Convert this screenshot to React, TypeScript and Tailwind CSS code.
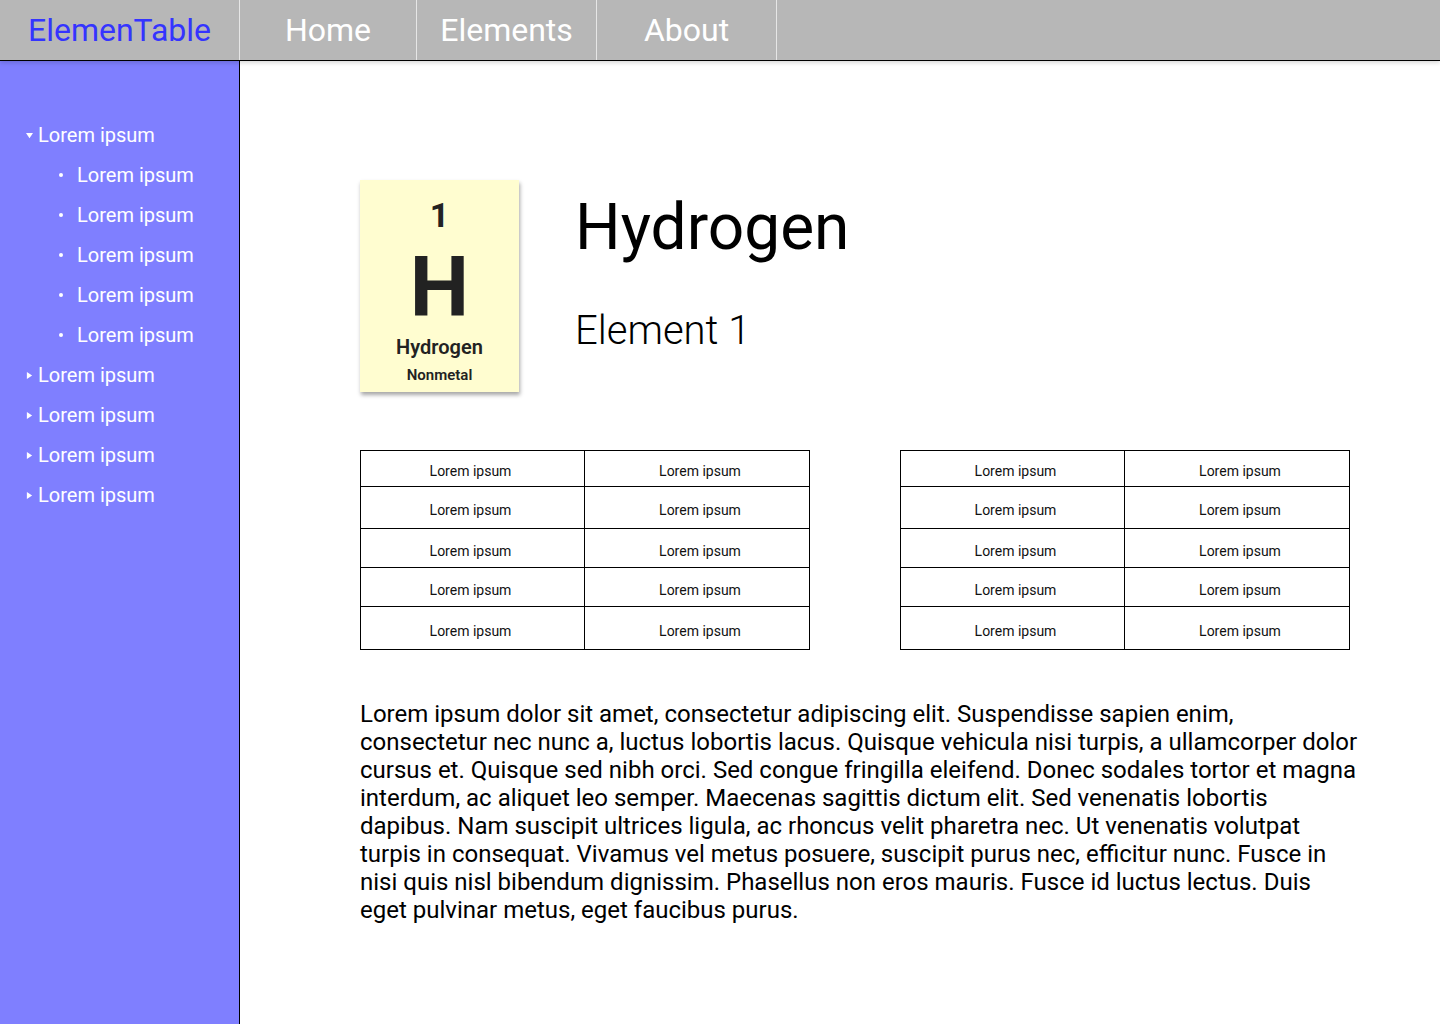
const font = { fontFamily: "Roboto, 'Liberation Sans', sans-serif" };

const navItems = [
  { label: "Home", w: "w-[177px]" },
  { label: "Elements", w: "w-[180px]" },
  { label: "About", w: "w-[180px]" },
];

const rowHeights = ["h-[36px]", "h-[42px]", "h-[39px]", "h-[39px]", "h-[43px]"];

function Triangle({ down }: { down?: boolean }) {
  return (
    <svg width="7" height="7" viewBox="0 0 8 8" className="mr-[5px] mt-[1px]">
      {down ? <path d="M0 1 L8 1 L4 7 Z" fill="white" /> : <path d="M1 0 L7 4 L1 8 Z" fill="white" />}
    </svg>
  );
}

function InfoTable({ firstPad }: { firstPad: string }) {
  return (
    <table className="w-[450px] border-collapse border border-black text-[14px] text-[#111]">
      <tbody>
        {rowHeights.map((h, i) => (
          <tr key={i} className={h}>
            <td className={`w-[224px] border border-black pt-[6px] text-center ${firstPad}`}>Lorem ipsum</td>
            <td className="border border-black pl-[6px] pt-[6px] text-center">Lorem ipsum</td>
          </tr>
        ))}
      </tbody>
    </table>
  );
}

export default function App() {
  return (
    <div className="flex h-[1024px] w-[1440px] flex-col overflow-hidden bg-white" style={font}>
      <header className="relative z-10 flex h-[61px] shrink-0 border-b border-black bg-[#b7b7b7] shadow-[0_2px_4px_rgba(0,0,0,0.15)]">
        <div className="flex w-[240px] items-center justify-center border-r border-[#e6e6e6] text-[32px] text-[#3434ff]">
          ElemenTable
        </div>
        {navItems.map((n) => (
          <div
            key={n.label}
            className={`flex ${n.w} items-center justify-center border-r border-[#e6e6e6] text-[32px] text-white`}
          >
            {n.label}
          </div>
        ))}
      </header>

      <div className="flex flex-1">
        <aside className="w-[240px] shrink-0 border-r border-black bg-[#7f7fff] pt-[54px] text-[20px] text-white">
          <div className="flex h-[40px] items-center pl-[26px]">
            <Triangle down />
            Lorem ipsum
          </div>
          {[0, 1, 2, 3, 4].map((i) => (
            <div key={i} className="flex h-[40px] items-center pl-[59px]">
              <span className="mr-[14px] h-[4px] w-[4px] rounded-full bg-white" />
              Lorem ipsum
            </div>
          ))}
          {[0, 1, 2, 3].map((i) => (
            <div key={i} className="flex h-[40px] items-center pl-[26px]">
              <Triangle />
              Lorem ipsum
            </div>
          ))}
        </aside>

        <main className="flex-1 pl-[120px] pt-[119px]">
          <div className="flex items-start">
            <div className="flex h-[212px] w-[159px] flex-col items-center bg-[#fffdd0] pt-[15px] shadow-[1px_3px_4px_rgba(0,0,0,0.35)] text-[#222]">
              <div className="text-[34px] font-bold leading-[40px]">1</div>
              <div className="mt-[11px] text-[84px] font-bold leading-[84px]">H</div>
              <div className="mt-[5px] text-[20px] font-semibold leading-[24px]">Hydrogen</div>
              <div className="mt-[7px] text-[15px] font-semibold leading-[18px]">Nonmetal</div>
            </div>
            <div className="ml-[56px] pt-[10px] text-black">
              <h1 className="text-[64px] leading-[76px]">Hydrogen</h1>
              <p className="mt-[41px] text-[40px] font-light leading-[48px]">Element 1</p>
            </div>
          </div>

          <div className="mt-[58px] flex gap-[90px]">
            <InfoTable firstPad="pr-[4px]" />
            <InfoTable firstPad="pl-[6px]" />
          </div>

          <p className="mt-[50px] w-[1000px] text-[24px] leading-[28px] text-black">
            Lorem ipsum dolor sit amet, consectetur adipiscing elit. Suspendisse sapien enim, consectetur nec nunc a,
            luctus lobortis lacus. Quisque vehicula nisi turpis, a ullamcorper dolor cursus et. Quisque sed nibh orci.
            Sed congue fringilla eleifend. Donec sodales tortor et magna interdum, ac aliquet leo semper. Maecenas
            sagittis dictum elit. Sed venenatis lobortis dapibus. Nam suscipit ultrices ligula, ac rhoncus velit
            pharetra nec. Ut venenatis volutpat turpis in consequat. Vivamus vel metus posuere, suscipit purus nec,
            efficitur nunc. Fusce in nisi quis nisl bibendum dignissim. Phasellus non eros mauris. Fusce id luctus
            lectus. Duis eget pulvinar metus, eget faucibus purus.
          </p>
        </main>
      </div>
    </div>
  );
}
